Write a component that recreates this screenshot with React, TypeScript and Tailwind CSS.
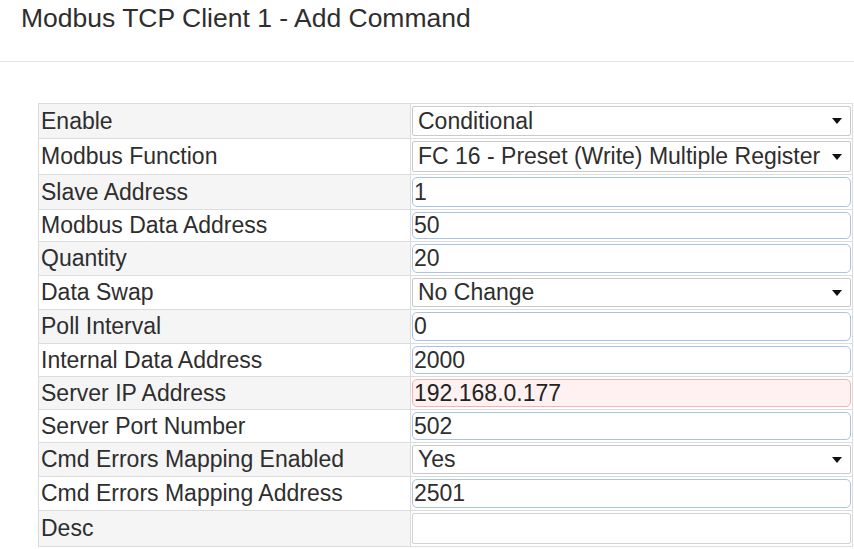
import { ReactNode } from "react"

type Kind = "select" | "input" | "error" | "plain"

interface Field {
  label: string
  value: string
  kind: Kind
  h: string
  shade: boolean
}

const fields: Field[] = [
  { label: "Enable", value: "Conditional", kind: "select", h: "h-[35px]", shade: true },
  { label: "Modbus Function", value: "FC 16 - Preset (Write) Multiple Register", kind: "select", h: "h-[36px]", shade: false },
  { label: "Slave Address", value: "1", kind: "input", h: "h-[35px]", shade: true },
  { label: "Modbus Data Address", value: "50", kind: "input", h: "h-[32px]", shade: false },
  { label: "Quantity", value: "20", kind: "input", h: "h-[34px]", shade: true },
  { label: "Data Swap", value: "No Change", kind: "select", h: "h-[34px]", shade: false },
  { label: "Poll Interval", value: "0", kind: "input", h: "h-[34px]", shade: true },
  { label: "Internal Data Address", value: "2000", kind: "input", h: "h-[33px]", shade: false },
  { label: "Server IP Address", value: "192.168.0.177", kind: "error", h: "h-[33px]", shade: true },
  { label: "Server Port Number", value: "502", kind: "input", h: "h-[33px]", shade: false },
  { label: "Cmd Errors Mapping Enabled", value: "Yes", kind: "select", h: "h-[34px]", shade: true },
  { label: "Cmd Errors Mapping Address", value: "2501", kind: "input", h: "h-[34px]", shade: false },
  { label: "Desc", value: "", kind: "plain", h: "h-[35px]", shade: true },
]

const Arrow = () => (
  <svg width="10" height="6" viewBox="0 0 10 6" className="absolute right-[8px] top-1/2 -translate-y-1/2">
    <path d="M0 0 L10 0 L5 6 Z" fill="#111" />
  </svg>
)

const Control = ({ kind, value }: { kind: Kind; value: string }): ReactNode => {
  if (kind === "select") {
    return (
      <div className="relative h-full w-full flex items-center bg-white border border-[#cacaca] rounded-[2px] pl-[5px] pr-[22px] whitespace-nowrap overflow-hidden">
        {value}
        <Arrow />
      </div>
    )
  }
  const look =
    kind === "error"
      ? "border-[#f1b3b3] bg-[#fff1f1] text-[#222] rounded-[5px]"
      : kind === "plain"
      ? "border-[#d2d2d2] bg-white text-[#2e2e2e] rounded-[2px]"
      : "border-[#a9c3e6] bg-white text-[#2e2e2e] rounded-[5px]"
  return (
    <input
      readOnly
      value={value}
      className={`h-full w-full border pl-[1px] outline-none text-[23px] font-[family-name:'Liberation_Sans',Arial,sans-serif] ${look}`}
    />
  )
}

export default function App() {
  return (
    <main className="w-[854px] h-[549px] overflow-hidden bg-white text-[#2e2e2e] font-[family-name:'Liberation_Sans',Arial,sans-serif]">
      <h1 className="pl-[21px] pt-[3px] text-[26.5px] leading-[30px]">Modbus TCP Client 1 - Add Command</h1>
      <div className="mt-[28px] border-t border-[#e3e3e3]" />
      <div className="ml-[38px] mt-[41px] w-[815px] border border-[#dcdcdc] text-[23px]">
        {fields.map(({ label, value, kind, h, shade }, id) => (
          <div
            key={id}
            className={`flex ${h} ${id < fields.length - 1 ? "border-b border-[#dcdcdc]" : ""} ${
              shade ? "bg-[#f5f5f5]" : "bg-white"
            }`}
          >
            <div className="w-[372px] shrink-0 flex items-center pl-[2px] border-r border-[#dcdcdc] whitespace-nowrap">
              {label}
            </div>
            <div className="flex-1 flex py-[2px] pl-[1px] pr-[1px] bg-white">
              <Control kind={kind} value={value} />
            </div>
          </div>
        ))}
      </div>
    </main>
  )
}
